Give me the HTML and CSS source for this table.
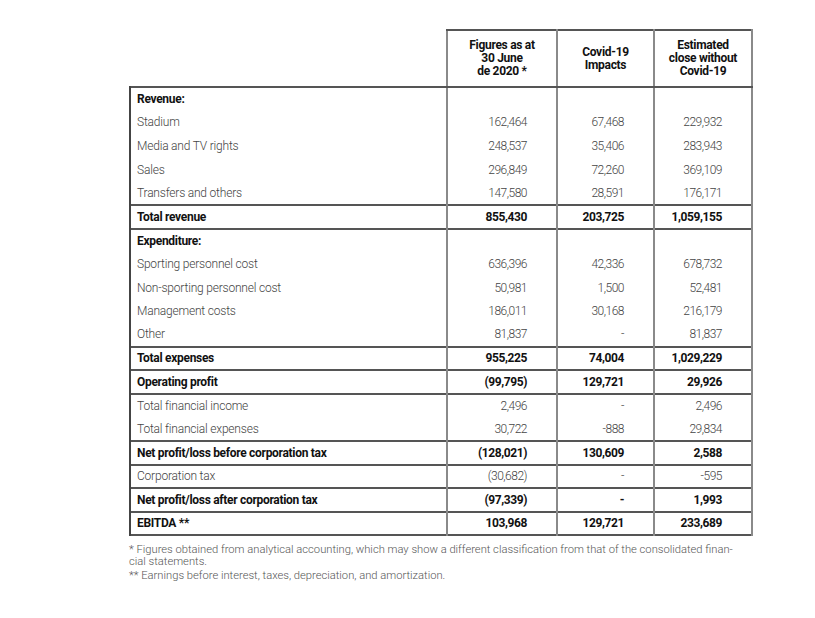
FILE: index.html
```html
<!DOCTYPE html>
<html lang="en">
<head>
<meta charset="utf-8">
<title>Figures</title>
<link rel="stylesheet" href="styles.css">
</head>
<body>
<div class="page">
  <table class="fin">
    <colgroup>
      <col class="c-label"><col class="c-a"><col class="c-b"><col class="c-c">
    </colgroup>
    <thead>
      <tr>
        <th class="blank"></th>
        <th>Figures as at<br>30 June<br>de 2020 *</th>
        <th>Covid-19<br>Impacts</th>
        <th>Estimated<br>close without<br>Covid-19</th>
      </tr>
    </thead>
    <tbody>
      <tr class="b"><td>Revenue:</td><td></td><td></td><td></td></tr>
      <tr><td>Stadium</td><td>162,464</td><td>67,468</td><td>229,932</td></tr>
      <tr><td>Media and TV rights</td><td>248,537</td><td>35,406</td><td>283,943</td></tr>
      <tr><td>Sales</td><td>296,849</td><td>72,260</td><td>369,109</td></tr>
      <tr><td>Transfers and others</td><td>147,580</td><td>28,591</td><td>176,171</td></tr>
    </tbody>
    <tbody>
      <tr class="b"><td>Total revenue</td><td>855,430</td><td>203,725</td><td>1,059,155</td></tr>
    </tbody>
    <tbody>
      <tr class="b"><td>Expenditure:</td><td></td><td></td><td></td></tr>
      <tr><td>Sporting personnel cost</td><td>636,396</td><td>42,336</td><td>678,732</td></tr>
      <tr><td>Non-sporting personnel cost</td><td>50,981</td><td>1,500</td><td>52,481</td></tr>
      <tr><td>Management costs</td><td>186,011</td><td>30,168</td><td>216,179</td></tr>
      <tr><td>Other</td><td>81,837</td><td>-</td><td>81,837</td></tr>
    </tbody>
    <tbody>
      <tr class="b"><td>Total expenses</td><td>955,225</td><td>74,004</td><td>1,029,229</td></tr>
    </tbody>
    <tbody>
      <tr class="b"><td>Operating profit</td><td>(99,795)</td><td>129,721</td><td>29,926</td></tr>
    </tbody>
    <tbody>
      <tr><td>Total financial income</td><td>2,496</td><td>-</td><td>2,496</td></tr>
      <tr><td>Total financial expenses</td><td>30,722</td><td>-888</td><td>29,834</td></tr>
    </tbody>
    <tbody>
      <tr class="b"><td>Net profit/loss before corporation tax</td><td>(128,021)</td><td>130,609</td><td>2,588</td></tr>
    </tbody>
    <tbody>
      <tr><td>Corporation tax</td><td>(30,682)</td><td>-</td><td>-595</td></tr>
    </tbody>
    <tbody>
      <tr class="b"><td>Net profit/loss after corporation tax</td><td>(97,339)</td><td>-</td><td>1,993</td></tr>
    </tbody>
    <tbody>
      <tr class="b"><td>EBITDA **</td><td>103,968</td><td>129,721</td><td>233,689</td></tr>
    </tbody>
  </table>
  <div class="notes">
    <p>* Figures obtained from analytical accounting, which may show a different classification from that of the consolidated finan-<br>cial statements.</p>
    <p>** Earnings before interest, taxes, depreciation, and amortization.</p>
  </div>
</div>
</body>
</html>
```
FILE: styles.css
```css
html, body {
  margin: 0;
  padding: 0;
  background: #ffffff;
}

.page {
  padding: 29px 0 0 129px;
  font-family: Roboto, "Liberation Sans", sans-serif;
}

.fin {
  border-collapse: collapse;
  table-layout: fixed;
  width: 622px;
}

.c-label { width: 317px; }
.c-a { width: 110px; }
.c-b { width: 97px; }
.c-c { width: 98px; }

.fin th {
  height: 55px;
  padding: 0 2px;
  border: 2px solid #555;
  border-left-color: #8a8a8a;
  border-right-color: #8a8a8a;
  font-weight: 700;
  font-size: 12px;
  line-height: 13px;
  letter-spacing: -0.3px;
  color: #111;
  text-align: center;
  vertical-align: middle;
}

.fin th.blank {
  border: none;
}

.fin tbody {
  border-top: 2px solid #555;
  border-bottom: 2px solid #555;
}

.fin tr {
  height: 23.6px;
}

.fin td {
  padding: 0 29px 0 6px;
  border-left: 2px solid #8a8a8a;
  border-right: 2px solid #8a8a8a;
  font-size: 12px;
  font-weight: 300;
  color: #444;
  letter-spacing: -0.5px;
  text-align: right;
  vertical-align: middle;
  white-space: nowrap;
}

.fin td:first-child {
  text-align: left;
  letter-spacing: -0.2px;
  border-left-color: #444;
}

.fin tr.b td {
  font-weight: 700;
  color: #111;
  letter-spacing: -0.4px;
}

.fin tr.b td:first-child {
  letter-spacing: -0.3px;
}

.notes {
  margin-top: 8px;
  width: 660px;
  font-size: 11.2px;
  font-weight: 300;
  line-height: 12px;
  color: #555;
  white-space: nowrap;
}

.notes p {
  margin: 0;
}

.notes p + p {
  margin-top: 2px;
}
```
